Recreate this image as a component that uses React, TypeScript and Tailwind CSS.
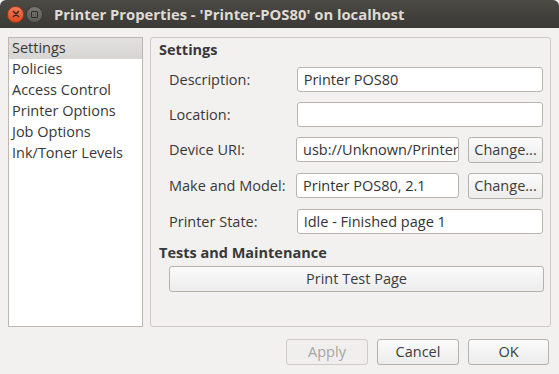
import React from "react";

const font = { fontFamily: '"Open Sans", "Noto Sans", sans-serif' };

function Entry({ value, w }: { value: string; w: string }) {
  return (
    <div
      className={`${w} h-[25px] bg-white border border-[#b9b5ae] rounded-[3px] pl-[6px] pr-[2px] flex items-center overflow-hidden whitespace-nowrap text-[#333333]`}
    >
      {value}
    </div>
  );
}

function Btn({ label, w, disabled }: { label: string; w: string; disabled?: boolean }) {
  return (
    <div
      className={`${w} h-[26px] rounded-[3px] border flex items-center justify-center ${
        disabled
          ? "border-[#cfccc7] bg-[#f0efee] text-[#a8a5a0]"
          : "border-[#b6b2ab] bg-gradient-to-b from-[#fbfbfb] to-[#ececec] text-[#3c3c3c]"
      }`}
    >
      {label}
    </div>
  );
}

export default function App() {
  const items = ["Settings", "Policies", "Access Control", "Printer Options", "Job Options", "Ink/Toner Levels"];
  const rows: { label: string; value: string; change?: boolean }[] = [
    { label: "Description:", value: "Printer POS80" },
    { label: "Location:", value: "" },
    { label: "Device URI:", value: "usb://Unknown/Printer", change: true },
    { label: "Make and Model:", value: "Printer POS80, 2.1", change: true },
    { label: "Printer State:", value: "Idle - Finished page 1" },
  ];
  return (
    <div style={font} className="w-[559px] h-[374px] bg-[#f2f1f0] flex flex-col text-[14.5px] text-[#383838] overflow-hidden">
      <div className="h-[28px] shrink-0 rounded-t-[6px] bg-gradient-to-b from-[#4b4a45] to-[#3a3935] flex items-center">
        <div className="ml-[7px] w-[17px] h-[17px] rounded-full bg-gradient-to-b from-[#f47a56] to-[#df4a1c] border border-[#a83a17] flex items-center justify-center">
          <svg width="8" height="8" viewBox="0 0 8 8">
            <path d="M1.5 1.5 L6.5 6.5 M6.5 1.5 L1.5 6.5" stroke="#3a2a20" strokeWidth="1.6" strokeLinecap="round" />
          </svg>
        </div>
        <div className="ml-[2px] w-[17px] h-[17px] rounded-full bg-gradient-to-b from-[#7a7873] to-[#5c5a55] border border-[#3a3935] flex items-center justify-center">
          <div className="w-[7px] h-[7px] border border-[#2f2e2b] rounded-[1px]" />
        </div>
        <div className="ml-[11px] font-bold text-[#dfdbd2] text-[14.8px] whitespace-nowrap">
          Printer Properties - 'Printer-POS80' on localhost
        </div>
      </div>
      <div className="flex pt-[9px] pl-[8px] gap-[7px]">
        <div className="w-[135px] h-[290px] bg-white border border-[#bcb8b1] flex flex-col">
          {items.map((it, i) => (
            <div
              key={it}
              className={`h-[21px] pl-[3px] flex items-center whitespace-nowrap leading-none ${
                i === 0 ? "bg-gradient-to-b from-[#e2e1df] to-[#d6d5d3]" : ""
              }`}
            >
              {it}
            </div>
          ))}
        </div>
        <div className="w-[401px] h-[290px] border border-[#cdcac5] rounded-[3px] pl-[8px] pr-[7px] flex flex-col">
          <div className="font-bold h-[22px] mt-[1px] flex items-center">Settings</div>
          <div className="flex flex-col gap-[10px] mt-[6px] pl-[10px]">
            {rows.map((r) => (
              <div key={r.label} className="flex items-center">
                <div className="w-[128px] whitespace-nowrap">{r.label}</div>
                {r.change ? (
                  <div className="flex gap-[9px]">
                    <Entry value={r.value} w="w-[163px]" />
                    <Btn label="Change..." w="w-[75px]" />
                  </div>
                ) : (
                  <Entry value={r.value} w="w-[247px]" />
                )}
              </div>
            ))}
          </div>
          <div className="font-bold h-[22px] mt-[8px] flex items-center">Tests and Maintenance</div>
          <div className="pl-[10px] mt-[2px]">
            <Btn label="Print Test Page" w="w-[375px]" />
          </div>
        </div>
      </div>
      <div className="flex justify-end gap-[9px] pr-[10px] mt-[12px]">
        <Btn label="Apply" w="w-[82px]" disabled />
        <Btn label="Cancel" w="w-[82px]" />
        <Btn label="OK" w="w-[81px]" />
      </div>
    </div>
  );
}
